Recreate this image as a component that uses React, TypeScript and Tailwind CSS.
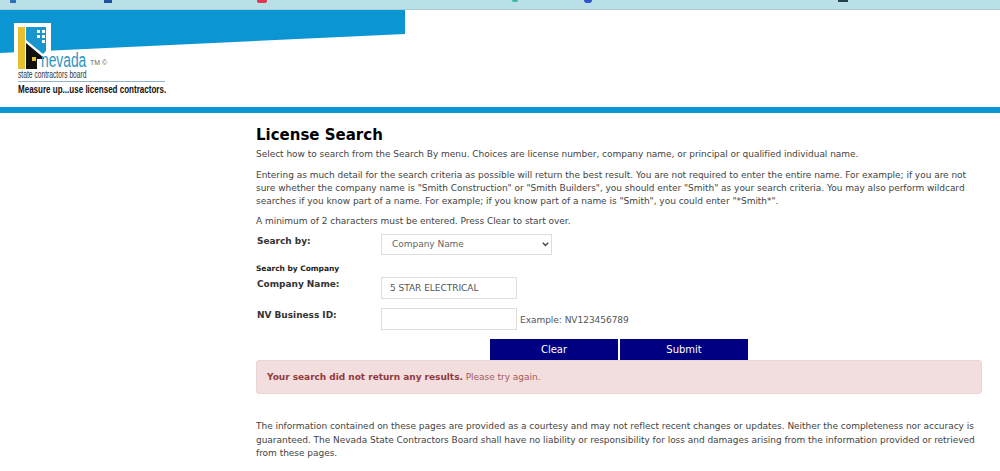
const verdana = "font-['DejaVu_Sans',sans-serif]";

function BookmarkBar() {
  return (
    <div className="flex h-[10px] items-start overflow-hidden border-b border-[#a9ccd4] bg-[#b9e0e6]">
      <span className="ml-[10px] h-[3px] w-[6px] bg-[#2f6fb5]" />
      <span className="ml-[88px] h-[3px] w-[8px] bg-[#1f4fa0]" />
      <span className="ml-[145px] h-[3px] w-[10px] rounded-b-[2px] bg-[#e2334f]" />
      <span className="ml-[245px] h-[2px] w-[6px] rounded-b-full bg-[#3bb79c]" />
      <span className="ml-[66px] h-[3px] w-[8px] rounded-b-full bg-[#2f55c9]" />
      <span className="ml-[246px] h-[2px] w-[10px] bg-[#24424a]" />
    </div>
  );
}

function Logo() {
  return (
    <div className="absolute left-[14px] top-[13px] h-[84px] w-[155px] font-['Liberation_Sans',sans-serif]">
      <div className="absolute left-0 top-0 h-[46px] w-[37px] bg-white" />
      <svg className="absolute left-[4px] top-[4px]" width="43" height="42" viewBox="0 0 43 42">
        <rect x="0" y="0" width="7" height="42" fill="#e6c02f" />
        <path d="M8 0H28V24L25 27L8 13Z" fill="#1a96cf" />
        <path d="M8 16L26 31V32H19V42H8Z" fill="#111" />
        <rect x="14" y="30" width="4" height="4" fill="#e6c02f" />
        <rect x="19" y="3" width="3" height="3" fill="#fff" />
        <rect x="24" y="3" width="3" height="3" fill="#fff" />
        <rect x="19" y="8" width="3" height="3" fill="#fff" />
        <rect x="24" y="8" width="3" height="3" fill="#fff" />
        <rect x="24" y="13" width="3" height="3" fill="#fff" />
      </svg>
      <div className="absolute left-[27px] top-[26px] origin-left scale-x-[0.69] whitespace-nowrap text-[20px] leading-[22px] text-[#2b95bd]">
        nevada
      </div>
      <div className="absolute left-[76px] top-[35px] whitespace-nowrap text-[7px] leading-[10px] text-[#666]">TM ©</div>
      <div className="absolute left-[4px] top-[47px] origin-left scale-x-[0.67] whitespace-nowrap text-[10px] leading-[10px] text-[#333]">
        state contractors board
      </div>
      <div className="absolute left-[4px] top-[58px] h-px w-[147px] bg-[#8fb4cc]" />
      <div className="absolute left-[4px] top-[60px] origin-left scale-x-[0.73] whitespace-nowrap text-[11px] leading-[12px] font-bold text-[#111]">
        Measure up...use licensed contractors.
      </div>
    </div>
  );
}

function Header() {
  return (
    <header className="relative h-[97px] bg-white">
      <svg className="block" width="405" height="43" viewBox="0 0 405 43">
        <path d="M0 0H405V24L0 43Z" fill="#0b96d3" />
      </svg>
      <Logo />
    </header>
  );
}

function Row({ label, className, children }: { label: string; className: string; children: React.ReactNode }) {
  return (
    <div className={`flex ${className}`}>
      <label className="w-[125px] shrink-0 pt-[1px] pl-[1px] text-[9px] leading-[13px] font-bold text-[#333]">{label}</label>
      {children}
    </div>
  );
}

export default function App() {
  return (
    <div className={`h-[471px] w-[1000px] overflow-hidden bg-white ${verdana}`}>
      <BookmarkBar />
      <Header />
      <div className="h-[6px] bg-[#0b96d3]" />
      <main className="ml-[256px] w-[726px] pt-[12px] text-[9px] leading-[13px] tracking-[-0.03px] text-[#444]">
        <h1 className="text-[15px] leading-[20px] font-bold tracking-normal text-black">License Search</h1>
        <p className="mt-[3px]">
          Select how to search from the Search By menu. Choices are license number, company name, or principal or qualified individual name.
        </p>
        <p className="mt-[8px]">
          Entering as much detail for the search criteria as possible will return the best result. You are not required to enter the entire name. For example; if you are not sure whether the company name is "Smith Construction" or "Smith Builders", you should enter "Smith" as your search criteria. You may also perform wildcard searches if you know part of a name. For example; if you know part of a name is "Smith", you could enter "*Smith*".
        </p>
        <p className="mt-[7px]">A minimum of 2 characters must be entered. Press Clear to start over.</p>

        <Row label="Search by:" className="mt-[6px]">
          <div className="relative">
            <select
              defaultValue="Company Name"
              className="h-[21px] w-[171px] appearance-none border border-[#ddd] bg-white pl-[10px] text-[9px] text-[#666]"
            >
              <option>Company Name</option>
            </select>
            <svg className="pointer-events-none absolute right-[3px] top-[8px]" width="7" height="5" viewBox="0 0 7 5">
              <path d="M0.8 0.8L3.5 3.5L6.2 0.8" fill="none" stroke="#444" strokeWidth="1.4" />
            </svg>
          </div>
        </Row>
        <div className="mt-[9px] text-[7.5px] leading-[10px] font-bold text-[#222]">Search by Company</div>
        <Row label="Company Name:" className="mt-[3px]">
          <input
            readOnly
            value="5 STAR ELECTRICAL"
            className="h-[22px] w-[136px] border border-[#ddd] px-[8px] text-[9px] text-[#555] outline-none"
          />
        </Row>
        <Row label="NV Business ID:" className="mt-[9px]">
          <input readOnly className="h-[22px] w-[136px] border border-[#ddd] outline-none" />
          <span className="ml-[3px] pt-[6px] text-[#555]">Example: NV123456789</span>
        </Row>
        <div className="mt-[9px] ml-[234px] flex gap-[2px]">
          <button className="h-[21px] w-[128px] bg-[#000080] text-[10px] text-white">Clear</button>
          <button className="h-[21px] w-[128px] bg-[#000080] text-[10px] text-white">Submit</button>
        </div>
        <div className="h-[34px] rounded-[3px] border border-[#ebd5d6] bg-[#f2dede] pl-[10px] text-[9px] leading-[32px] text-[#a35a5c]">
          <b className="text-[#93393d]">Your search did not return any results.</b> Please try again.
        </div>
        <p className="mt-[26px] leading-[13.5px]">
          The information contained on these pages are provided as a courtesy and may not reflect recent changes or updates. Neither the completeness nor accuracy is guaranteed. The Nevada State Contractors Board shall have no liability or responsibility for loss and damages arising from the information provided or retrieved from these pages.
        </p>
      </main>
    </div>
  );
}
